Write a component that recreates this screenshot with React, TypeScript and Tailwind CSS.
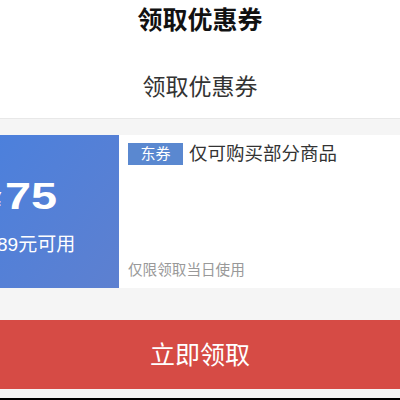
export default function App() {
    const font = { fontFamily: '"Liberation Sans", "Noto Sans CJK SC", sans-serif' };
    return (
        <main style={font} className="w-[400px] h-[400px] bg-[#f5f5f5] flex flex-col overflow-hidden">
            <header className="h-[119px] bg-white border-b border-[#e8e8e8] flex flex-col items-center pt-[4px]">
                <h1 className="text-[25px] leading-[32px] font-bold text-[#111]">领取优惠券</h1>
                <h2 className="mt-[36px] text-[23px] leading-[30px] text-[#333]">领取优惠券</h2>
            </header>
            <section className="mt-[16px] h-[153px] flex">
                <div className="w-[119px] shrink-0 overflow-hidden bg-gradient-to-br from-[#4c80dc] to-[#5d80d0] text-white flex flex-col pt-[44px] whitespace-nowrap">
                    <div className="ml-[-12px] h-[36px] leading-[36px] font-bold text-[36px]">
                        <span className="text-[24px] mr-[4px]">¥</span>
                        <span className="inline-block scale-x-[1.3] origin-left">75</span>
                    </div>
                    <div className="ml-[-22px] mt-[18px] text-[19px] leading-[24px]">满89元可用</div>
                </div>
                <div className="flex-1 bg-white flex flex-col justify-between pl-[9px] pt-[8px] pb-[8px]">
                    <div className="flex items-center">
                        <span className="h-[22px] w-[55px] bg-[#5a88d0] text-white text-[15px] leading-[22px] text-center">东券</span>
                        <span className="ml-[6px] text-[18.5px] leading-[22px] text-[#333]">仅可购买部分商品</span>
                    </div>
                    <div className="text-[14.6px] leading-[20px] text-[#999]">仅限领取当日使用</div>
                </div>
            </section>
            <button className="mt-[32px] h-[69px] w-full bg-[#d64b45] text-white text-[25px] leading-[32px]">立即领取</button>
            <div className="flex-1" />
            <div className="h-[2px] bg-black" />
        </main>
    );
}
